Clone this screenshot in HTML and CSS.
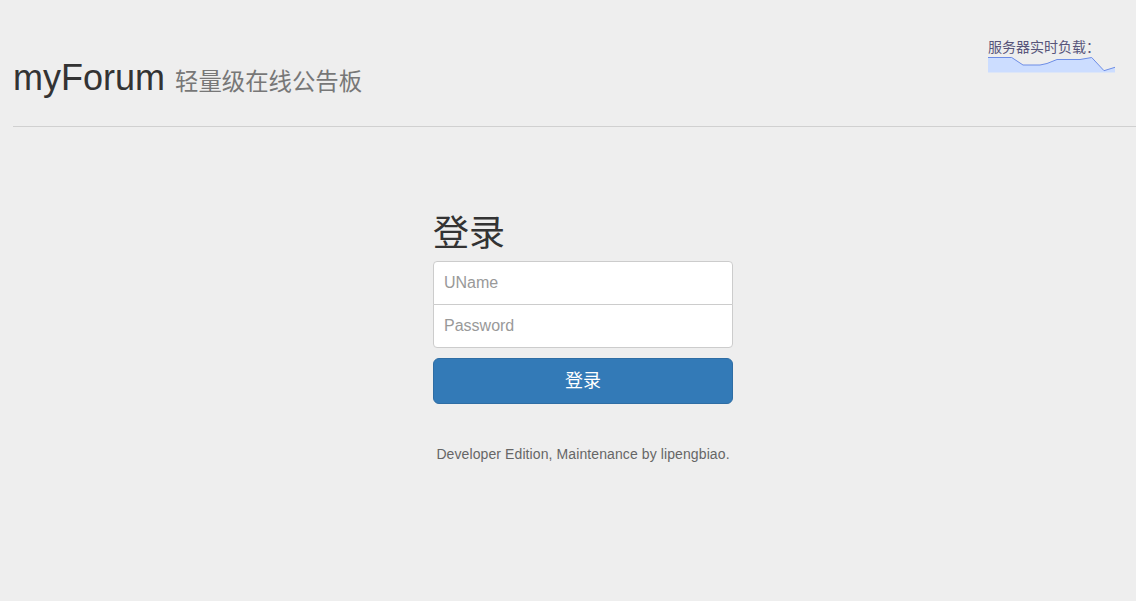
FILE: index.html
```html
<!DOCTYPE html>
<html lang="zh-CN">
<head>
<meta charset="utf-8">
<title>myForum</title>
<link rel="stylesheet" href="styles.css">
</head>
<body>
<header class="page-header">
  <h1 class="brand">myForum <small>轻量级在线公告板</small></h1>
  <div class="load">
    <div class="load-label">服务器实时负载：</div>
    <svg class="spark" width="128" height="17" viewBox="0 0 128 17">
      <polygon points="0,16.5 0,1.5 23.7,1.5 35,9 52,9 59,7.5 69,3.5 92,3.5 103.7,1.5 116,14.7 127,11.3 127,16.5" fill="#ccddff"/>
      <polyline points="0,1.5 23.7,1.5 35,9 52,9 59,7.5 69,3.5 92,3.5 103.7,1.5 116,14.7 127,11.3" fill="none" stroke="#6d8de6" stroke-width="1"/>
    </svg>
  </div>
</header>
<main class="main">
  <form class="signin">
    <h2 class="signin-heading">登录</h2>
    <input class="field field-top" type="text" placeholder="UName">
    <input class="field field-bottom" type="password" placeholder="Password">
    <button class="btn-login" type="button">登录</button>
  </form>
  <p class="footer">Developer Edition, Maintenance by lipengbiao.</p>
</main>
</body>
</html>
```
FILE: styles.css
```css
html, body {
  margin: 0;
  padding: 0;
}
body {
  background: #eeeeee;
  font-family: "Liberation Sans", Arial, "Noto Sans CJK SC", sans-serif;
  font-size: 14px;
  color: #333;
}
.page-header {
  margin-left: 13px;
  height: 127px;
  box-sizing: border-box;
  border-bottom: 1px solid #d0d0d0;
  display: flex;
  justify-content: space-between;
  align-items: flex-start;
}
.brand {
  margin: 58px 0 0 0;
  font-size: 36px;
  line-height: 40px;
  font-weight: 400;
  color: #333;
  white-space: nowrap;
}
.brand small {
  font-size: 23.4px;
  color: #777;
  font-weight: 400;
}
.load {
  margin: 38px 20px 0 0;
  display: flex;
  flex-direction: column;
  gap: 1px;
}
.load-label {
  font-family: "Noto Sans CJK SC", sans-serif;
  font-size: 14px;
  line-height: 17px;
  color: #58557a;
  white-space: nowrap;
}
.spark {
  display: block;
}
.main {
  padding-left: 30px;
  display: flex;
  flex-direction: column;
  align-items: center;
}
.signin {
  width: 300px;
  margin-top: 87px;
  display: flex;
  flex-direction: column;
}
.signin-heading {
  margin: 0 0 7px 0;
  font-size: 36px;
  line-height: 40px;
  font-weight: 400;
  color: #333;
  font-family: "Liberation Sans", "Noto Sans CJK SC", sans-serif;
}
.field {
  display: block;
  box-sizing: border-box;
  width: 300px;
  height: 44px;
  padding: 10px;
  font-family: "Liberation Sans", Arial, sans-serif;
  font-size: 16px;
  color: #555;
  background: #fff;
  border: 1px solid #ccc;
  outline: none;
}
.field::placeholder {
  color: #999;
}
.field-top {
  border-radius: 4px 4px 0 0;
}
.field-bottom {
  margin-top: -1px;
  border-radius: 0 0 4px 4px;
}
.btn-login {
  margin-top: 10px;
  height: 46px;
  width: 300px;
  background: #337ab7;
  border: 1px solid #2e6da4;
  border-radius: 6px;
  color: #fff;
  font-size: 18px;
  line-height: 20px;
  padding: 0;
  font-family: "Liberation Sans", "Noto Sans CJK SC", sans-serif;
  cursor: pointer;
}
.footer {
  margin: 40px 0 0 0;
  font-size: 14px;
  line-height: 20px;
  letter-spacing: 0.1px;
  color: #666;
}
```
